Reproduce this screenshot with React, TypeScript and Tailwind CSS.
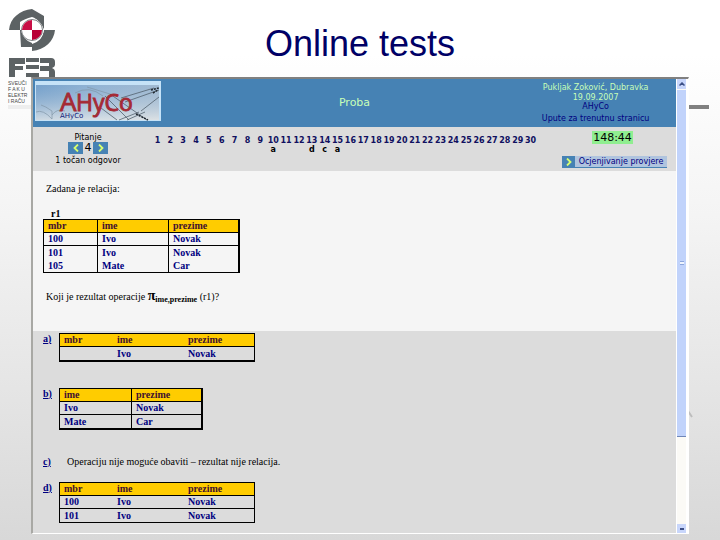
import React from "react";

type RelationProps = {
  columns: { label: string; width: string }[];
  rows: string[][];
  ruled?: boolean;
  rowLines?: boolean[];
  frame: string;
  caption: string;
};

function Relation({ columns, rows, ruled = false, rowLines = [], frame, caption }: RelationProps) {
  const cell = ruled ? "border-l border-black first:border-l-0" : "";
  return (
    <table
      aria-label={caption}
      className={`table-fixed border-separate border-spacing-0 border-black text-left font-bold text-[#000080] ${frame}`}
    >
      <thead className="bg-[#ffcc00] text-[#401030]">
        <tr className="h-[13px]">
          {columns.map((c) => (
            <th key={c.label} className={`border-b border-b-black p-0 pl-1 leading-3 ${cell} ${c.width}`}>
              {c.label}
            </th>
          ))}
        </tr>
      </thead>
      <tbody>
        {rows.map((row, r) => (
          <tr key={r} className="h-[13px]">
            {row.map((value, i) => (
              <td key={i} className={`p-0 pl-1 leading-3 ${cell} ${rowLines[r] ? "border-b border-b-black" : ""}`}>
                {value}
              </td>
            ))}
          </tr>
        ))}
      </tbody>
    </table>
  );
}

function Answer({ id, className, children }: { id: string; className: string; children: React.ReactNode }) {
  return (
    <li className={`flex items-start ${className}`}>
      <a href={`#${id}`} className="w-[18px] shrink-0 pl-[2px] font-bold leading-3 text-[#000080] underline">
        {id})
      </a>
      {children}
    </li>
  );
}

function FacultyLogo() {
  return (
    <div className="absolute left-2 top-2 w-12">
      <svg viewBox="0 0 48 70" className="block h-[70px] w-12" role="img" aria-label="FER">
        <g fill="#5c6264">
          <path d="M1 22C2 10 12 2 24 1V9C19 10 15 12 12 14V22Z" />
          <path d="M12 22L13 39H24V33C18 31 14 28 13 22Z" />
          <path d="M24 1L36 8V22C33 15 30 11 24 9Z" />
          <path d="M36 22H47C46 33 37 42 24 43V36C31 34 35 29 36 22Z" />
          <path d="M1 50H17V56H7V58H15V62H7V69H1Z" />
          <path d="M18 50H31V54H18ZM18 57H31V61H18ZM18 65H31V69H18Z" />
          <path d="M32 50H43Q47 50 47 54V57Q47 59 44 60Q47 61 47 64V69H41V63H32V58H41V55H32Z" />
        </g>
        <path d="M13 22Q14 11 24 10Q33 12 36 22Q34 33 24 35Q15 32 13 22Z" fill="white" />
        <circle cx="24" cy="22" r="10.500" fill="white" stroke="#5c6264" strokeWidth="0.8" />
        <path d="M24 22H14A10 10 0 0 1 24 12Z" fill="#c80f46" />
        <path d="M24 22H34A10 10 0 0 1 24 32Z" fill="#b80035" />
      </svg>
      <p className="mt-[2px] whitespace-nowrap font-['Liberation_Sans'] text-[5px] leading-[6px] text-[#444]">
        SVEUČI
        <br />F A K U<br />
        ELEKTR
        <br />I RAČU
      </p>
    </div>
  );
}

function Banner() {
  return (
    <svg viewBox="0 0 126 40" className="block h-10 w-[126px]" role="img" aria-label="AHyCo">
      <defs>
        <linearGradient id="sky" x1="0" y1="0" x2="1" y2="0">
          <stop offset="0" stopColor="#86aed4" />
          <stop offset="0.5" stopColor="#b4cce2" />
          <stop offset="1" stopColor="#cbd5dd" />
        </linearGradient>
        <linearGradient id="mist" x1="0" y1="0" x2="0" y2="1">
          <stop offset="0" stopColor="#6090c0" stopOpacity="0.4" />
          <stop offset="1" stopColor="#e0e4e6" stopOpacity="0.8" />
        </linearGradient>
      </defs>
      <rect width="126" height="40" fill="#c5e2f7" />
      <rect x="1" y="4" width="123" height="35" fill="url(#sky)" />
      <rect x="1" y="4" width="123" height="35" fill="url(#mist)" />
      <g fill="none" stroke="#8196a8" strokeWidth="0.7">
        <path d="M1 31Q8 28 17 38M17 38V30Q10 25 6 24M17 34Q22 27 30 30M40 12Q54 4 68 15M52 6L75 13" />
      </g>
      <g fill="none" stroke="#52616d" strokeWidth="0.8">
        <path d="M70 15L94 39M75 13L112 39M86 17L119 7M90 21L124 9M106 30L124 16M84 39L104 31M92 39L110 31M60 35L66 27L82 39" />
      </g>
      <path d="M116 9L124 7M118 12L123 9M101 33L113 39" stroke="#202830" strokeWidth="1.500" strokeDasharray="2 1" />
      <g fill="#a52a35" stroke="#a52a35" strokeWidth="0.900" fontFamily="Open Sans, sans-serif">
        <text x="25" y="30" fontSize="26">A</text>
        <text x="41" y="30" fontSize="23">HyCo</text>
      </g>
      <text x="25" y="37" fill="#101878" fontFamily="DejaVu Sans, sans-serif" fontSize="7">AHyCo</text>
    </svg>
  );
}

const given: Record<number, string> = { 10: "a", 13: "d", 14: "c", 15: "a" };
const questions = Array.from({ length: 30 }, (_, i) => i + 1);

function Chevron({ back = false }: { back?: boolean }) {
  return (
    <svg viewBox="0 0 6 8" className="h-2 w-[6px]" fill="none" stroke="#d8ff70" strokeWidth="1.800">
      <path d={back ? "M5 0.500L1.500 4L5 7.500" : "M1 0.500L4.500 4L1 7.500"} />
    </svg>
  );
}

function QuizHeader() {
  return (
    <header className="grid h-12 grid-cols-4 bg-[#4682b4] text-center">
      <div className="pl-[2px] pt-[2px]">
        <Banner />
      </div>
      <h2 className="col-span-2 self-center text-[11px] leading-4 text-[#c8ffb8]">Proba</h2>
      <div className="flex flex-col whitespace-nowrap pt-[3px] text-[8px] text-[#000080]">
        <span className="leading-3 text-[#c8ffb8]">Pukljak Zoković, Dubravka</span>
        <span className="leading-[7px] text-[#c8ffb8]">19.09.2007</span>
        <a href="#ahyco" className="leading-3">AHyCo</a>
        <a href="#upute" className="leading-3">Upute za trenutnu stranicu</a>
      </div>
    </header>
  );
}

function QuestionNav() {
  return (
    <nav className="flex h-11 bg-[#dcdcdc]">
      <div className="w-[110px] pt-[6px] text-center text-[8px] leading-[9px]">
        <p>Pitanje</p>
        <div className="flex h-3 items-center justify-center">
          <button aria-label="Prethodno pitanje" className="flex h-3 w-[15px] items-center justify-center bg-[#4682b4]">
            <Chevron back />
          </button>
          <span className="w-[10px] text-[11px] leading-3">4</span>
          <button aria-label="Sljedeće pitanje" className="flex h-3 w-[15px] items-center justify-center bg-[#4682b4]">
            <Chevron />
          </button>
        </div>
        <p className="pt-[2px]">1 točan odgovor</p>
      </div>
      <ol className="ml-2 grid w-[386px] grid-cols-[repeat(30,minmax(0,1fr))] pt-[9px] text-center text-[8px] font-bold leading-[9px]">
        {questions.map((n) => (
          <li key={n} className="flex flex-col items-center">
            <a href={`#q${n}`} className="text-[#101060]">{n}</a>
            <span>{given[n]}</span>
          </li>
        ))}
      </ol>
      <div className="ml-auto mr-[9px] flex w-[105px] flex-col items-center pt-1">
        <time className="mr-1 bg-[#90ee90] px-px text-[11px] leading-[13px]">148:44</time>
        <button className="mt-3 flex h-3 w-full items-center border-b border-[#4682b4] bg-[#b0c4de] text-[8px] text-[#000080]">
          <span className="flex h-3 w-[13px] items-center justify-center bg-[#4682b4]">
            <Chevron />
          </span>
          <span className="flex-1 whitespace-nowrap text-center leading-[10px]">Ocjenjivanje provjere</span>
        </button>
      </div>
    </nav>
  );
}

function ScrollBar() {
  return (
    <div aria-hidden="true" className="flex w-3 flex-col border-l border-r-2 border-white bg-[#fbfaf6]">
      <span className="flex h-[10px] items-center justify-center bg-[#c8d6fb]">
        <svg viewBox="0 0 6 4" className="h-1 w-[6px]" fill="none" stroke="#3c4f87" strokeWidth="1.500"><path d="M0.500 3.500L3 1L5.500 3.500" /></svg>
      </span>
      <span className="mt-px flex h-[347px] items-center justify-center border-b border-[#6f86b8] bg-[#c1d3fb]">
        <span className="h-1 w-1 border-y border-[#8ca6dc] bg-[#eef4fe]" />
      </span>
      <span className="mt-auto flex h-[9px] items-center justify-center bg-[#c8d6fb]">
        <span className="h-[2px] w-1 bg-[#3c4f87]" />
      </span>
    </div>
  );
}

const wide = [
  { label: "mbr", width: "w-[53px]" },
  { label: "ime", width: "w-[71px]" },
  { label: "prezime", width: "w-[70px]" },
];

export default function App() {
  return (
    <main className="relative min-h-screen bg-linear-to-b from-white from-10% via-[#f4f4f4] via-40% to-[#d8d8d8] pb-[5px] font-['DejaVu_Sans',sans-serif] text-black">
      <FacultyLogo />
      <div className="absolute left-2 top-[105px] h-1 w-6 bg-[#eeeeee]" />
      <div className="absolute right-[11px] top-[105px] h-1 w-6 bg-[#808080]" />
      <svg viewBox="0 0 6 8" className="absolute right-[26px] top-[410px] h-2 w-[6px]" stroke="#bdbdbd" strokeWidth="2">
        <path d="M0 1L4 7" />
      </svg>
      <h1 className="h-[77px] pt-6 text-center font-['Liberation_Sans',sans-serif] text-4xl leading-10 text-[#000066]">
        Online tests
      </h1>
      <div className="relative mx-[31px] flex border-b border-l-2 border-r border-t-2 border-b-white border-l-[#a8a8a4] border-r-white border-t-[#808080]">
        <div className="min-w-0 flex-1">
          <QuizHeader />
          <QuestionNav />
          <section className="h-40 bg-[#f5f5f5] pl-[10px] pt-3 font-['Liberation_Serif',serif] text-[10px] leading-3">
            <p className="pl-[3px]">Zadana je relacija:</p>
            <p className="mt-[13px] pl-2 font-bold leading-[11px]">r1</p>
            <Relation
              caption="r1"
              columns={wide}
              rows={[["100", "Ivo", "Novak"], ["101", "Ivo", "Novak"], ["105", "Mate", "Car"]]}
              ruled
              rowLines={[true]}
              frame="w-[197px] border border-r-2"
            />
            <p className="mt-[14px] pl-[3px] leading-5">
              Koji je rezultat operacije <b className="text-sm leading-4">π</b>
              <sub className="text-[8px] font-bold">ime,prezime</sub> (r1)?
            </p>
          </section>
          <ol className="h-[202px] bg-[#dcdcdc] pl-2 font-['Liberation_Serif',serif] text-[10px] leading-3">
            <Answer id="a" className="h-[55px] pt-[2px]">
              <Relation caption="a" columns={wide} rows={[["", "Ivo", "Novak"]]} frame="w-[196px] border border-b-2" />
            </Answer>
            <Answer id="b" className="h-[68px] pt-[2px]">
              <Relation
                caption="b"
                columns={[{ label: "ime", width: "w-[71px]" }, { label: "prezime", width: "w-[70px]" }]}
                rows={[["Ivo", "Novak"], ["Mate", "Car"]]}
                ruled
                rowLines={[true]}
                frame="w-36 border border-b-2 border-r-2"
              />
            </Answer>
            <Answer id="c" className="h-7 pt-[2px]">
              <p className="pl-2">Operaciju nije moguće obaviti – rezultat nije relacija.</p>
            </Answer>
            <Answer id="d" className="">
              <Relation caption="d" columns={wide} rows={[["100", "Ivo", "Novak"], ["101", "Ivo", "Novak"]]} rowLines={[true]} frame="w-[196px] border" />
            </Answer>
          </ol>
        </div>
        <ScrollBar />
      </div>
    </main>
  );
}
